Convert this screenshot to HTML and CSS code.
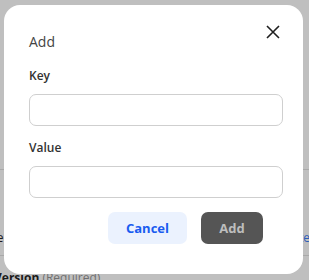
FILE: index.html
```html
<!DOCTYPE html>
<html lang="en">
    <head>
        <meta charset="UTF-8">
        <meta name="viewport" content="width=device-width, initial-scale=1.0">
        <title>Add</title>
        <link rel="stylesheet" href="styles.css">
    </head>
    <body>
        <div class="page">
            <div class="page-top"></div>
            <div class="page-row">
                <span class="cell">Name</span>
                <span class="cell">Filt<span class="cell-link">er</span></span>
            </div>
            <div class="page-field">
                <b>Version</b> <span class="muted">(Required)</span>
            </div>
        </div>

        <div class="overlay">
            <form class="modal" name="addItem">
                <button type="button" class="close" aria-label="Close">
                    <svg width="14" height="14" viewBox="0 0 14 14">
                        <path d="M1 1 L13 13 M13 1 L1 13" stroke="#1f1f1f" stroke-width="1.6" fill="none" />
                    </svg>
                </button>
                <h2 class="title">Add</h2>
                <label class="field-label" for="key">Key</label>
                <input class="field-input" type="text" id="key" name="key">
                <label class="field-label" for="value">Value</label>
                <input class="field-input" type="text" id="value" name="value">
                <div class="actions">
                    <button type="button" class="btn btn-cancel">Cancel</button>
                    <button type="submit" class="btn btn-add">Add</button>
                </div>
            </form>
        </div>
    </body>
</html>
```

FILE: styles.css
```css
html, body { margin: 0; padding: 0; }
body { background: #bfbfbf; font-family: "Open Sans", "Noto Sans", sans-serif; overflow: hidden; height: 280px; }

.page { display: flex; flex-direction: column; }
.page-top { height: 169px; border-bottom: 1px solid #a9a9a9; }
.page-row { display: flex; justify-content: space-between; align-items: flex-end; box-sizing: border-box; height: 86px; padding-bottom: 9px; border-bottom: 1px solid #a9a9a9; font-size: 12px; line-height: 16px; color: #1c1c1c; margin: 0 -6px 0 -30px; }
.cell-link { color: #2a5cb8; }
.page-field { font-size: 12px; line-height: 16px; padding-top: 14px; margin-left: -6px; color: #1a1a1a; }
.muted { color: #707070; }

.overlay { position: absolute; top: 5px; left: 4px; }
.modal { position: relative; box-sizing: border-box; width: 299px; height: 269px; background: #fff; border-radius: 16px; padding: 27px 20px 0 25px; display: flex; flex-direction: column; }

.close { position: absolute; top: 19px; right: 22px; width: 16px; height: 16px; padding: 1px; border: 0; background: none; cursor: pointer; display: flex; }

.title { margin: 0 0 16px; font-size: 14px; line-height: 20px; font-weight: 400; color: #444; }
.field-label { font-size: 12px; line-height: 16px; font-weight: 600; color: #333; margin-bottom: 10px; }
.field-input { box-sizing: border-box; height: 32px; width: 100%; border: 1px solid #cfcfcf; border-radius: 7px; margin: 0 0 14px; padding: 0 10px; font: inherit; }

.actions { display: flex; justify-content: flex-end; gap: 14px; padding-right: 20px; }
.btn { height: 32px; border: 0; border-radius: 7px; font-family: "Open Sans", "Noto Sans", sans-serif; font-size: 13px; font-weight: 700; cursor: pointer; }
.btn-cancel { width: 79px; background: #ebf2fe; color: #1a5cf0; }
.btn-add { width: 62px; background: #555; color: #bdbdbd; }
```
